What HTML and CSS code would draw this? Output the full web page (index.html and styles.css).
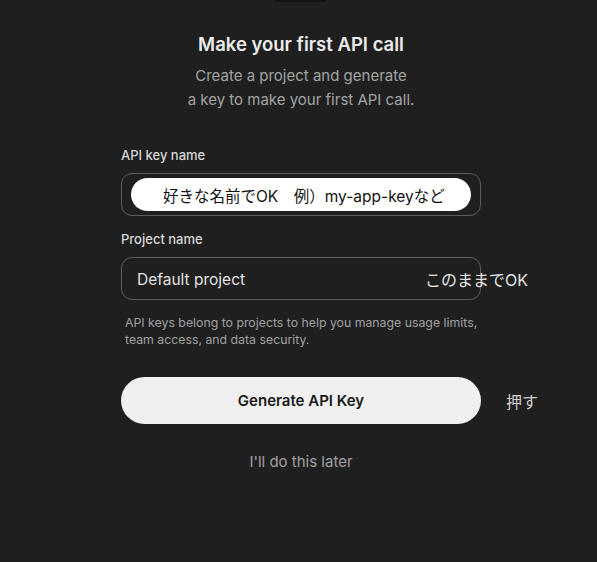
FILE: index.html
```html
<!DOCTYPE html>
<html lang="en">
<head>
  <meta charset="UTF-8" />
  <meta name="viewport" content="width=device-width, initial-scale=1.0"/>
  <title>Make your first API call</title>
  <link rel="stylesheet" href="styles.css">
</head>
<body>

  <div class="top-tab"></div>

  <div class="panel">
    <h1>Make your first API call</h1>
    <p class="subtitle">Create a project and generate<br>a key to make your first API call.</p>

    <!-- API key name -->
    <label class="field-label">API key name</label>
    <div class="field">
      <div class="hint-pill">好きな名前でOK　例）my-app-keyなど</div>
    </div>

    <!-- Project name -->
    <label class="field-label">Project name</label>
    <div class="field field-note">
      <span class="field-value">Default project</span>
      <span class="note note-project">このままでOK</span>
    </div>

    <p class="help">API keys belong to projects to help you manage usage limits,<br>team access, and data security.</p>

    <div class="button-row">
      <button class="primary">Generate API Key</button>
      <span class="note note-button">押す</span>
    </div>

    <button class="later">I'll do this later</button>
  </div>

</body>
</html>
```

FILE: styles.css
```css
* {
  box-sizing: border-box;
}

body {
  margin: 0;
  padding: 0 0 0 5px;
  background: #1f1f1f;
  font-family: Inter, "Noto Sans", "Noto Sans CJK JP", sans-serif;
  color: #ececec;
  min-height: 100vh;
}

.top-tab {
  width: 52px;
  height: 2px;
  margin: 0 auto;
  background: #131313;
  border-radius: 0 0 4px 4px;
}

.panel {
  width: 360px;
  margin: 0 auto;
  padding-top: 30px;
  display: flex;
  flex-direction: column;
}

.panel h1 {
  margin: 0;
  text-align: center;
  font-size: 18.5px;
  font-weight: 600;
  line-height: 24px;
  color: #ececec;
}

.subtitle {
  margin: 8px 0 0;
  text-align: center;
  font-size: 15px;
  line-height: 24px;
  color: #a3a3a3;
}

.field-label {
  margin-top: 34px;
  font-size: 13px;
  font-weight: 500;
  line-height: 18px;
  color: #d6d6d6;
}

.field-label + .field {
  margin-top: 9px;
}

.field + .field-label {
  margin-top: 14px;
}

.field {
  position: relative;
  height: 43px;
  border: 1px solid #5c5c5c;
  border-radius: 11px;
  display: flex;
  align-items: center;
  padding: 0 9px;
}

.hint-pill {
  flex: 1;
  height: 33px;
  background: #ffffff;
  border-radius: 17px;
  color: #111;
  font-size: 15.5px;
  display: flex;
  align-items: center;
  padding-left: 32px;
}

.field-value {
  padding: 1px 0 0 6px;
  font-size: 15.5px;
  color: #e2e2e2;
}

.note {
  position: absolute;
  font-size: 16px;
  color: #e4e4e4;
  white-space: nowrap;
}

.note-project {
  left: 303px;
  top: 9px;
}

.help {
  margin: 14px 0 0;
  padding: 0 0 0 4px;
  font-size: 12.3px;
  line-height: 17px;
  color: #a0a0a0;
  white-space: nowrap;
}

.button-row {
  position: relative;
  margin-top: 29px;
}

.primary {
  width: 100%;
  height: 47px;
  border: none;
  border-radius: 24px;
  background: #f0f0f0;
  color: #1a1a1a;
  font-family: inherit;
  font-size: 15px;
  font-weight: 600;
  cursor: pointer;
}

.note-button {
  left: 385px;
  top: 12px;
  color: #cfcfcf;
}

.later {
  margin: 27px auto 0;
  border: none;
  background: none;
  font-family: inherit;
  font-size: 15px;
  color: #a0a0a0;
  cursor: pointer;
}
```
